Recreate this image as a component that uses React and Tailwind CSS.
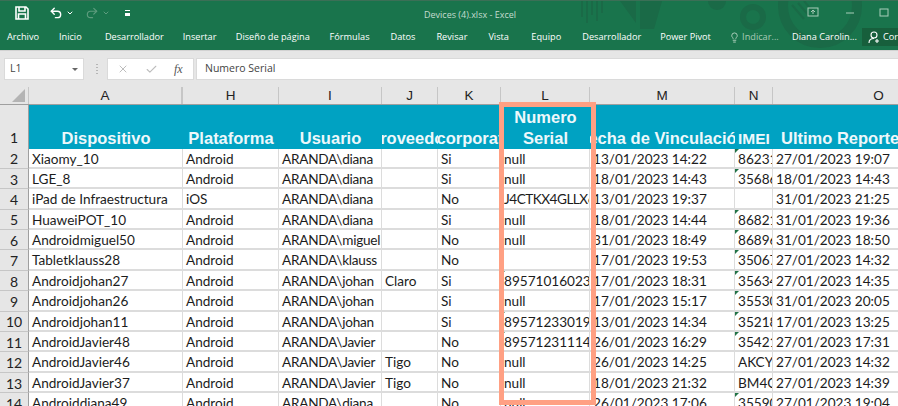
import { Undo2, Redo2, X, Check, Lightbulb, ChevronDown } from "lucide-react";

const rows = [
  ["Xiaomy_10", "Android", "ARANDA\\diana", "", "Si", "null", "13/01/2023 14:22", "86231", "27/01/2023 19:07"],
  ["LGE_8", "Android", "ARANDA\\diana", "", "Si", "null", "18/01/2023 14:43", "35686", "18/01/2023 14:43"],
  ["iPad de Infraestructura", "iOS", "ARANDA\\diana", "", "No", "J4CTKX4GLLX6", "13/01/2023 19:37", "", "31/01/2023 21:25"],
  ["HuaweiPOT_10", "Android", "ARANDA\\diana", "", "Si", "null", "18/01/2023 14:44", "86821", "31/01/2023 19:36"],
  ["Androidmiguel50", "Android", "ARANDA\\miguel", "", "No", "null", "31/01/2023 18:49", "86896", "31/01/2023 18:50"],
  ["Tabletklauss28", "Android", "ARANDA\\klauss", "", "No", "", "17/01/2023 19:53", "35067", "27/01/2023 14:32"],
  ["Androidjohan27", "Android", "ARANDA\\johan", "Claro", "Si", "89571016023", "17/01/2023 18:31", "35634", "27/01/2023 14:35"],
  ["Androidjohan26", "Android", "ARANDA\\johan", "", "Si", "null", "17/01/2023 15:17", "35530", "31/01/2023 20:05"],
  ["Androidjohan11", "Android", "ARANDA\\johan", "", "Si", "89571233019", "13/01/2023 14:34", "35218", "17/01/2023 13:25"],
  ["AndroidJavier48", "Android", "ARANDA\\Javier", "", "No", "89571231114", "26/01/2023 16:29", "35421", "27/01/2023 17:31"],
  ["AndroidJavier46", "Android", "ARANDA\\Javier", "Tigo", "No", "null", "26/01/2023 14:25", "AKCYU", "27/01/2023 14:32"],
  ["AndroidJavier37", "Android", "ARANDA\\Javier", "Tigo", "No", "null", "18/01/2023 21:32", "BM4C", "27/01/2023 14:39"],
  ["Androiddiana49", "Android", "ARANDA\\diana", "", "No", "null", "26/01/2023 17:06", "35590", "27/01/2023 19:04"],
];

const columns = [
  { letter: "A", title: "Dispositivo", width: "w-[154px]" },
  { letter: "H", title: "Plataforma", width: "w-[96px]" },
  { letter: "I", title: "Usuario", width: "w-[103px]", cell: "tracking-[-0.25px]" },
  { letter: "J", title: "Proveedor", width: "w-[56px]" },
  { letter: "K", title: "Es corporativo", width: "w-[63px]" },
  { letter: "L", title: "Numero Serial", width: "w-[89px]", wrap: true },
  { letter: "M", title: "Fecha de Vinculación", width: "w-[145px]" },
  { letter: "N", title: "IMEI", width: "w-[38px]", head: "text-[15.500px]" },
  { letter: "O", title: "Ultimo Reporte", width: "w-[212px]", left: true },
];

// numbers stored as text get the little green corner
const hasFlag = (colIdx, value) => {
  if (!value) return false;
  if (colIdx === 5 || colIdx === 7) return /^\d/.test(value);
  return false;
};

function TitleBar() {
  return (
    <div className="relative flex h-[24px] items-center text-white">
      <svg className="ml-[15px]" width="14" height="14" viewBox="0 0 14 14" fill="none" stroke="white" strokeWidth="1.6">
        <path d="M1 1h10l2 2v10H1z" />
        <path d="M4 1v4h6V1" />
        <path d="M3.500 13V8h7v5" />
      </svg>
      <Undo2 className="ml-[20px]" size={14} strokeWidth={2.4} />
      <ChevronDown className="ml-[3px]" size={8} strokeWidth={3} />
      <Redo2 className="ml-[11px] text-[#5d9c7e]" size={14} strokeWidth={2} />
      <ChevronDown className="ml-[3px] text-[#5d9c7e]" size={8} strokeWidth={3} />
      <div className="ml-[15px] flex flex-col items-center gap-[2px]">
        <div className="h-[1px] w-[5px] bg-white" />
        <div className="h-[3px] w-[5px] bg-white" />
      </div>
      <span className="absolute left-[424px] top-[7px] text-[9px] leading-[14px] text-[#c4dccf] [font-family:'Open_Sans',sans-serif]">
        Devices (4).xlsx - Excel
      </span>
      <svg className="absolute left-[570px] top-0" width="328" height="49" viewBox="0 0 328 49" fill="none">
        <g stroke="#1a6a47" strokeWidth="2">
          <path d="M12 0v16M17 0v22M22 0v14M27 0v20M32 0v12" />
        </g>
        <path d="M50 0l16 22V0zM70 0v28h14l8-28z" fill="#1a6a47" />
        <circle cx="147" cy="0" r="9" fill="#1a6a47" />
        <circle cx="183" cy="16" r="10" stroke="#1a6a47" strokeWidth="6" />
        <circle cx="250" cy="5" r="37" stroke="#1a6a47" strokeWidth="10" />
        <g stroke="#1a6a47" strokeWidth="2">
          <path d="M222 4l12 14M228 2l12 14M234 0l12 14" />
        </g>
      </svg>
      <svg className="absolute left-[807px] top-[6px]" width="86" height="12" viewBox="0 0 86 12" fill="none" stroke="#a9cdb9">
        <rect x="1" y="1" width="10" height="8" />
        <path d="M6 7V4M4 5l2-2 2 2" />
        <path d="M39 6h8" />
        <rect x="73" y="2" width="8" height="7" />
      </svg>
    </div>
  );
}

function TabBar() {
  return (
    <div className="relative flex h-[24px] items-center text-[9.200px] text-white [font-family:'Open_Sans',sans-serif]">
      <span className="ml-[7px] w-[52px]">Archivo</span>
      <span className="w-[46px]">Inicio</span>
      <span className="w-[78px]">Desarrollador</span>
      <span className="w-[53px]">Insertar</span>
      <span className="w-[94px]">Diseño de página</span>
      <span className="w-[61px]">Fórmulas</span>
      <span className="w-[46px]">Datos</span>
      <span className="w-[52px]">Revisar</span>
      <span className="w-[43px]">Vista</span>
      <span className="w-[51px]">Equipo</span>
      <span className="w-[78px]">Desarrollador</span>
      <span className="w-[69px]">Power Pivot</span>
      <Lightbulb size={11} className="text-[#b6d4c3]" />
      <span className="ml-[2px] w-[50px] text-[#a8cbb7]">Indicar...</span>
      <span className="w-[70px]">Diana Carolin...</span>
      <div className="flex h-[18px] flex-1 items-center gap-[2px] bg-[#175f3c] pl-[6px]">
        <svg width="13" height="13" viewBox="0 0 13 13" fill="none" stroke="white" strokeWidth="1.1">
          <circle cx="6" cy="4" r="3" />
          <path d="M1 12c0-3 2-4.500 5-4.500" />
          <path d="M9 8v4M7 10h4" />
        </svg>
        <span>Cor</span>
      </div>
    </div>
  );
}

function FormulaBar() {
  return (
    <div className="flex h-[37px] gap-[4px] border-t border-[#d2d2d2] bg-[#e6e6e6] pl-[5px] pt-[8px]">
      <div className="flex h-[20px] w-[78px] items-center justify-between bg-white pl-[5px] pr-[5px] text-[10.500px] text-[#444] shadow-[0_0_0_1px_#dadada] [font-family:'Open_Sans',sans-serif]">
        L1
        <div className="h-0 w-0 border-x-[3px] border-t-[3px] border-x-transparent border-t-[#666]" />
      </div>
      <div className="ml-[9px] mr-[6px] flex h-[20px] flex-col justify-center gap-[2px]">
        <div className="h-[1px] w-[2px] bg-[#b5b5b5]" />
        <div className="h-[1px] w-[2px] bg-[#b5b5b5]" />
        <div className="h-[1px] w-[2px] bg-[#b5b5b5]" />
        <div className="h-[1px] w-[2px] bg-[#b5b5b5]" />
      </div>
      <div className="flex h-[20px] w-[85px] items-center bg-white pl-[9px] shadow-[0_0_0_1px_#dadada]">
        <X size={12} className="text-[#bdbdbd]" />
        <Check size={13} className="ml-[16px] text-[#bdbdbd]" />
        <span className="ml-[16px] text-[12px] italic text-[#555] [font-family:'Liberation_Serif',serif]">fx</span>
      </div>
      <div className="flex h-[20px] flex-1 items-center bg-white pl-[8px] text-[10.500px] text-[#444] shadow-[0_0_0_1px_#dadada] [font-family:'Open_Sans',sans-serif]">
        Numero Serial
      </div>
    </div>
  );
}

function ColumnHeaders() {
  return (
    <div className="flex h-[18px] border-b border-[#9f9f9f] bg-[#e6e6e6] text-[13.500px] text-[#222] [font-family:'Liberation_Sans',sans-serif]">
      <div className="relative w-[29px] shrink-0 border-r border-[#c6c6c6]">
        <div className="absolute bottom-[2px] right-[3px] h-0 w-0 border-b-[13px] border-l-[13px] border-b-[#b4b4b4] border-l-transparent" />
      </div>
      {columns.map((c, i) => (
        <div
          key={c.letter}
          className={`${c.width} flex shrink-0 items-center justify-center border-r border-[#c6c6c6] pt-[1px] ${i === 0 ? "border-r-2" : ""}`}
        >
          {c.letter}
        </div>
      ))}
    </div>
  );
}

function HeaderRow() {
  return (
    <div className="flex h-[43.500px]">
      <div className="flex w-[29px] shrink-0 items-end justify-center border-r border-[#9f9f9f] bg-[#e6e6e6] pb-[1px] text-[14px] text-[#222]">
        1
      </div>
      {columns.map((c) => (
        <div
          key={c.letter}
          className={`${c.width} flex shrink-0 items-end overflow-hidden bg-[#00a2c2] font-bold leading-[21px] text-[#eef8fb] [font-family:'Liberation_Sans',sans-serif] ${c.head || "text-[16.500px]"} ${c.left ? "justify-start pl-[8px]" : "justify-center"} ${c.wrap ? "text-center whitespace-normal" : "whitespace-nowrap"}`}
        >
          <span className="shrink-0">
            {c.wrap ? (
              <>
                Numero
                <br />
                Serial
              </>
            ) : (
              c.title
            )}
          </span>
        </div>
      ))}
    </div>
  );
}

function DataRow({ num, row }) {
  return (
    <div className="flex h-[20.400px]">
      <div className="flex w-[29px] shrink-0 items-center justify-center border-b border-r border-b-[#c6c6c6] border-r-[#9f9f9f] bg-[#e6e6e6] pt-[1px] text-[14px] text-[#222]">
        {num}
      </div>
      {columns.map((c, i) => (
        <div
          key={c.letter}
          className={`${c.width} ${c.cell || ""} relative flex shrink-0 items-center overflow-hidden whitespace-nowrap border-b-2 border-r border-[#dcdcdc] bg-white pl-[3px] pt-[2px] text-[#1c1c1c]`}
        >
          {hasFlag(i, row[i]) && (
            <div className="absolute left-0 top-0 h-0 w-0 border-r-[4px] border-t-[4px] border-r-transparent border-t-[#217346]" />
          )}
          {i === 5 && /^[A-Z]/.test(row[i]) ? <span className="tracking-[-0.5px]">{row[i]}</span> : row[i]}
        </div>
      ))}
    </div>
  );
}

export default function App() {
  return (
    <div className="relative h-[406px] w-[898px] overflow-hidden bg-white text-[13.600px] [font-family:'Lato',sans-serif]">
      <div className="h-[50px] border-t border-[#3b6f56] bg-[#19744c]">
        <TitleBar />
        <TabBar />
      </div>
      <FormulaBar />
      <ColumnHeaders />
      <HeaderRow />
      {rows.map((row, i) => (
        <DataRow key={i} num={i + 2} row={row} />
      ))}
      {/* highlight box around the serial column */}
      <div className="absolute left-[499px] top-[102px] h-[303px] w-[97px] border-[5px] border-[#ffa083]" />
    </div>
  );
}
